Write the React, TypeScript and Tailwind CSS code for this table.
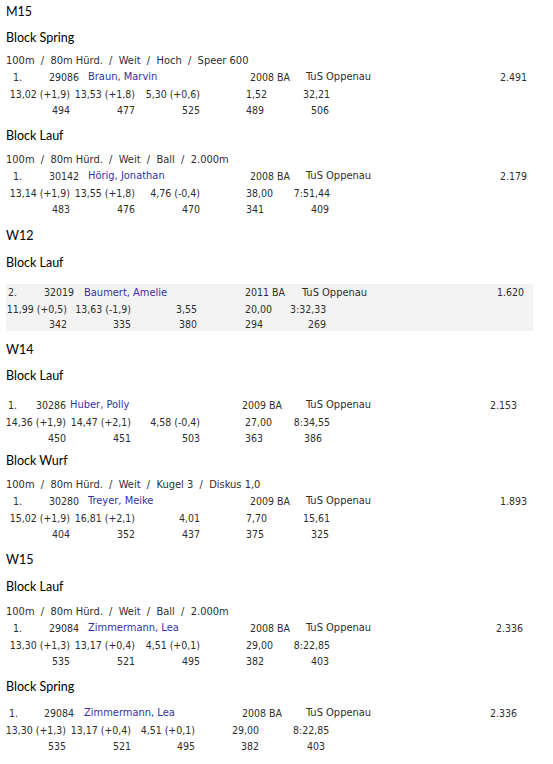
import React from "react";
import clsx from "clsx";

type Layout = {
  head: string[];
  total: string;
  res: string[];
  pts: string[];
};

type Entry = {
  place: string;
  nr: string;
  name: string;
  year: string;
  club: string;
  total: string;
  res: string[];
  pts: string[];
};

// blocks that carry a discipline line
const layoutA: Layout = {
  head: ["w-[49px] pl-[13px]", "w-[39px]", "w-[162px]", "w-[56px]", "w-[120px]"],
  total: "ml-auto pr-[26px]",
  res: ["w-[70px] text-right", "w-[65px] text-right", "w-[65px] text-right", "w-[90px] pl-[46px]", "w-[40px] text-right"],
  pts: ["w-[70px] text-right", "w-[65px] text-right", "w-[65px] text-right", "w-[90px] pl-[46px]", "w-[39px] text-right"],
};

const layoutA2: Layout = { ...layoutA, total: "ml-auto pr-[30px]" };

// grey row (W12), box starts at x=6
const layoutGray: Layout = {
  head: ["w-[38px] pl-[2px]", "w-[40px]", "w-[161px]", "w-[57px]", "w-[120px]"],
  total: "ml-auto pr-[9px]",
  res: ["w-[61px] text-right", "w-[64px] text-right", "w-[66px] text-right", "w-[93px] pl-[48px]", "w-[36px] text-right"],
  pts: ["w-[61px] text-right", "w-[64px] text-right", "w-[66px] text-right", "w-[93px] pl-[48px]", "w-[36px] text-right"],
};

const layoutW14: Layout = {
  head: ["w-[36px] pl-[8px]", "w-[34px]", "w-[172px]", "w-[64px]", "w-[120px]"],
  total: "ml-auto pr-[36px]",
  res: ["w-[66px] text-right", "w-[65px] text-right", "w-[69px] text-right", "w-[92px] pl-[45px]", "w-[38px] text-right"],
  pts: ["w-[66px] text-right", "w-[65px] text-right", "w-[69px] text-right", "w-[92px] pl-[45px]", "w-[30px] text-right"],
};

const layoutLast: Layout = {
  head: ["w-[44px] pl-[9px]", "w-[40px]", "w-[158px]", "w-[64px]", "w-[120px]"],
  total: "ml-auto pr-[36px]",
  res: ["w-[66px] text-right", "w-[65px] text-right", "w-[64px] text-right", "w-[64px] text-right", "w-[136px] pl-[34px]"],
  pts: ["w-[66px] text-right", "w-[65px] text-right", "w-[64px] text-right", "w-[64px] text-right", "w-[136px] pl-[48px]"],
};

function Table({
  e,
  l,
  mt,
  gray,
}: {
  e: Entry;
  l: Layout;
  mt: string;
  gray?: boolean;
}) {
  return (
    <div className={clsx(mt, gray && "ml-[6px] w-[527px] bg-[#f3f3f3]")}>
      <div className={clsx("flex whitespace-nowrap", gray ? "h-[17px] leading-[17px]" : "h-4 leading-4")}>
        <span className={l.head[0]}>{e.place}</span>
        <span className={l.head[1]}>{e.nr}</span>
        <span className={clsx(l.head[2], "text-[11px] text-[#3232a8]")}>{e.name}</span>
        <span className={l.head[3]}>{e.year}</span>
        <span className={clsx(l.head[4], "text-[11px]")}>{e.club}</span>
        <span className={l.total}>{e.total}</span>
      </div>
      <div className={clsx("flex whitespace-nowrap h-4 leading-4", !gray && "mt-px")}>
        {e.res.map((r, i) => (
          <span key={i} className={l.res[i]}>
            {r}
          </span>
        ))}
      </div>
      <div className={clsx("flex whitespace-nowrap", gray ? "h-[14px] leading-[14px]" : "h-4 leading-4")}>
        {e.pts.map((p, i) => (
          <span key={i} className={l.pts[i]}>
            {p}
          </span>
        ))}
      </div>
    </div>
  );
}

function Heading({ children, mt }: { children: React.ReactNode; mt: string }) {
  return (
    <div className={clsx(mt, "h-4 leading-4 pl-[6px] font-['Lato',sans-serif] text-[12.5px] text-black")}>
      {children}
    </div>
  );
}

function Disc({ text, mt }: { text: string; mt: string }) {
  return <div className={clsx(mt, "h-4 leading-4 pl-[6px] whitespace-pre text-[11px]")}>{text}</div>;
}

const zimmermann: Entry = {
  place: "1.",
  nr: "29084",
  name: "Zimmermann, Lea",
  year: "2008 BA",
  club: "TuS Oppenau",
  total: "2.336",
  res: ["13,30 (+1,3)", "13,17 (+0,4)", "4,51 (+0,1)", "29,00", "8:22,85"],
  pts: ["535", "521", "495", "382", "403"],
};

export default function App() {
  return (
    <div className="min-h-screen w-[553px] bg-white pt-1 text-[10.5px] text-[#2e2e2e] font-['DejaVu_Sans_Condensed','DejaVu_Sans',sans-serif]">
      <Heading mt="mt-0">M15</Heading>
      <Heading mt="mt-[10px]">Block Spring</Heading>
      <Disc mt="mt-[7px]" text="100m  /  80m Hürd.  /  Weit  /  Hoch  /  Speer 600" />
      <Table
        mt="mt-0"
        l={layoutA}
        e={{
          place: "1.",
          nr: "29086",
          name: "Braun, Marvin",
          year: "2008 BA",
          club: "TuS Oppenau",
          total: "2.491",
          res: ["13,02 (+1,9)", "13,53 (+1,8)", "5,30 (+0,6)", "1,52", "32,21"],
          pts: ["494", "477", "525", "489", "506"],
        }}
      />

      <Heading mt="mt-[10px]">Block Lauf</Heading>
      <Disc mt="mt-[8px]" text="100m  /  80m Hürd.  /  Weit  /  Ball  /  2.000m" />
      <Table
        mt="mt-0"
        l={layoutA}
        e={{
          place: "1.",
          nr: "30142",
          name: "Hörig, Jonathan",
          year: "2008 BA",
          club: "TuS Oppenau",
          total: "2.179",
          res: ["13,14 (+1,9)", "13,55 (+1,8)", "4,76 (-0,4)", "38,00", "7:51,44"],
          pts: ["483", "476", "470", "341", "409"],
        }}
      />

      <Heading mt="mt-[11px]">W12</Heading>
      <Heading mt="mt-[11px]">Block Lauf</Heading>
      <Table
        mt="mt-[13px]"
        gray
        l={layoutGray}
        e={{
          place: "2.",
          nr: "32019",
          name: "Baumert, Amelie",
          year: "2011 BA",
          club: "TuS Oppenau",
          total: "1.620",
          res: ["11,99 (+0,5)", "13,63 (-1,9)", "3,55", "20,00", "3:32,33"],
          pts: ["342", "335", "380", "294", "269"],
        }}
      />

      <Heading mt="mt-[11px]">W14</Heading>
      <Heading mt="mt-[10px]">Block Lauf</Heading>
      <Table
        mt="mt-[13px]"
        l={layoutW14}
        e={{
          place: "1.",
          nr: "30286",
          name: "Huber, Polly",
          year: "2009 BA",
          club: "TuS Oppenau",
          total: "2.153",
          res: ["14,36 (+1,9)", "14,47 (+2,1)", "4,58 (-0,4)", "27,00", "8:34,55"],
          pts: ["450", "451", "503", "363", "386"],
        }}
      />

      <Heading mt="mt-[7px]">Block Wurf</Heading>
      <Disc mt="mt-[8px]" text="100m  /  80m Hürd.  /  Weit  /  Kugel 3  /  Diskus 1,0" />
      <Table
        mt="mt-0"
        l={layoutA}
        e={{
          place: "1.",
          nr: "30280",
          name: "Treyer, Meike",
          year: "2009 BA",
          club: "TuS Oppenau",
          total: "1.893",
          res: ["15,02 (+1,9)", "16,81 (+2,1)", "4,01", "7,70", "15,61"],
          pts: ["404", "352", "437", "375", "325"],
        }}
      />

      <Heading mt="mt-[10px]">W15</Heading>
      <Heading mt="mt-[11px]">Block Lauf</Heading>
      <Disc mt="mt-[9px]" text="100m  /  80m Hürd.  /  Weit  /  Ball  /  2.000m" />
      <Table mt="mt-0" l={layoutA2} e={zimmermann} />

      <Heading mt="mt-[10px]">Block Spring</Heading>
      <Table mt="mt-[10px]" l={layoutLast} e={zimmermann} />
    </div>
  );
}
